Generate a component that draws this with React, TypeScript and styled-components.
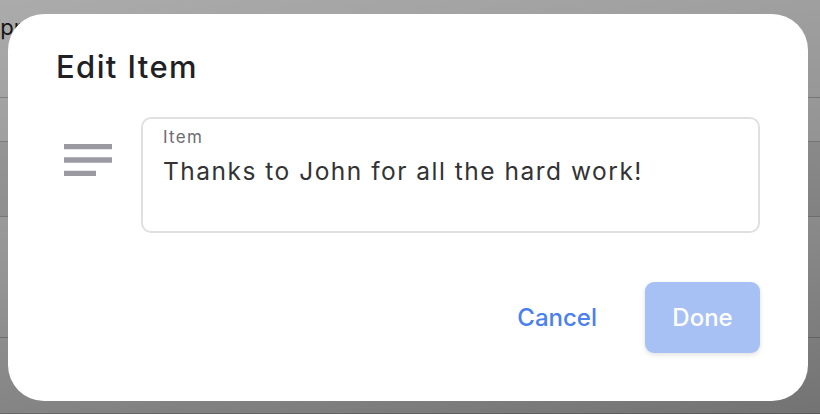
import React from "react";
import styled, { createGlobalStyle } from "styled-components";

const Global = createGlobalStyle`
  html, body { margin: 0; padding: 0; }
  body {
    width: 820px;
    height: 414px;
    overflow: hidden;
    font-family: Inter, "Noto Sans", sans-serif;
  }
`;

const Page = styled.div`
  position: relative;
  width: 820px;
  height: 414px;
  background: #ffffff;
  display: flex;
  flex-direction: column;
`;

const PageHeading = styled.div`
  height: 98px;
  box-sizing: border-box;
  padding: 14px 0 0 0;
  margin-left: -15px;
  font-size: 22px;
  line-height: 27px;
  color: #222;
  border-bottom: 1px solid #c8c8c8;
`;

const PageRow = styled.div<{ $h: number; $shade?: boolean }>`
  height: ${(p) => p.$h}px;
  box-sizing: border-box;
  border-bottom: 1px solid #c8c8c8;
  background: ${(p) => (p.$shade ? "#eeeeee" : "transparent")};
`;

const Overlay = styled.div`
  position: absolute;
  inset: 0;
  background: linear-gradient(
    170deg,
    rgba(0, 0, 0, 0.33) 0%,
    rgba(0, 0, 0, 0.42) 50%,
    rgba(0, 0, 0, 0.55) 100%
  );
  display: flex;
  padding: 14px 12px 13px 8px;
  box-sizing: border-box;
`;

const Dialog = styled.div`
  flex: 1;
  background: #ffffff;
  border-radius: 36px;
  padding: 32px 48px 48px 48px;
  display: flex;
  flex-direction: column;
`;

const Title = styled.h2`
  margin: 0 0 30px 0;
  padding-left: 0;
  font-size: 31px;
  line-height: 41px;
  font-weight: 500;
  color: #1f2125;
  letter-spacing: 1.4px;
`;

const Body = styled.div`
  display: flex;
  align-items: flex-start;
  gap: 21px;
`;

const IconBox = styled.div`
  width: 64px;
  height: 64px;
  margin-top: 11px;
  flex: none;
  color: #9b9aa3;
`;

const Field = styled.label`
  flex: 1;
  height: 116px;
  box-sizing: border-box;
  border: 2px solid #e0e0e0;
  border-radius: 10px;
  padding: 8px 20px 0 20px;
  display: flex;
  flex-direction: column;
  gap: 8px;
`;

const FieldLabel = styled.span`
  font-size: 17px;
  line-height: 21px;
  letter-spacing: 1.3px;
  color: #6d6d70;
`;

const FieldValue = styled.span`
  font-size: 24.5px;
  line-height: 30px;
  letter-spacing: 1.5px;
  color: #333336;
`;

const Footer = styled.div`
  margin-top: auto;
  display: flex;
  justify-content: flex-end;
  align-items: center;
  gap: 28px;
`;

const TextButton = styled.button`
  border: none;
  background: none;
  padding: 0 20px;
  height: 71px;
  font-family: inherit;
  font-size: 24px;
  font-weight: 500;
  color: #4b80ee;
`;

const FilledButton = styled.button`
  border: none;
  width: 115px;
  height: 71px;
  border-radius: 9px;
  background: #a8c1f5;
  color: #ffffff;
  font-family: inherit;
  font-size: 24px;
  font-weight: 500;
  box-shadow: 0 2px 5px rgba(0, 0, 0, 0.12);
`;

const NotesIcon = () => (
  <svg width="64" height="64" viewBox="0 0 24 24" fill="currentColor">
    <path d="M3 18h12v-2H3v2zM3 6v2h18V6H3zm0 7h18v-2H3v2z" />
  </svg>
);

export default function App() {
  return (
    <>
      <Global />
      <Page>
        <PageHeading>Approvals</PageHeading>
        <PageRow $h={44} />
        <PageRow $h={75} $shade />
        <PageRow $h={121} />
        <PageRow $h={76} />
        <Overlay>
          <Dialog>
            <Title>Edit Item</Title>
            <Body>
              <IconBox>
                <NotesIcon />
              </IconBox>
              <Field>
                <FieldLabel>Item</FieldLabel>
                <FieldValue>Thanks to John for all the hard work!</FieldValue>
              </Field>
            </Body>
            <Footer>
              <TextButton>Cancel</TextButton>
              <FilledButton>Done</FilledButton>
            </Footer>
          </Dialog>
        </Overlay>
      </Page>
    </>
  );
}
